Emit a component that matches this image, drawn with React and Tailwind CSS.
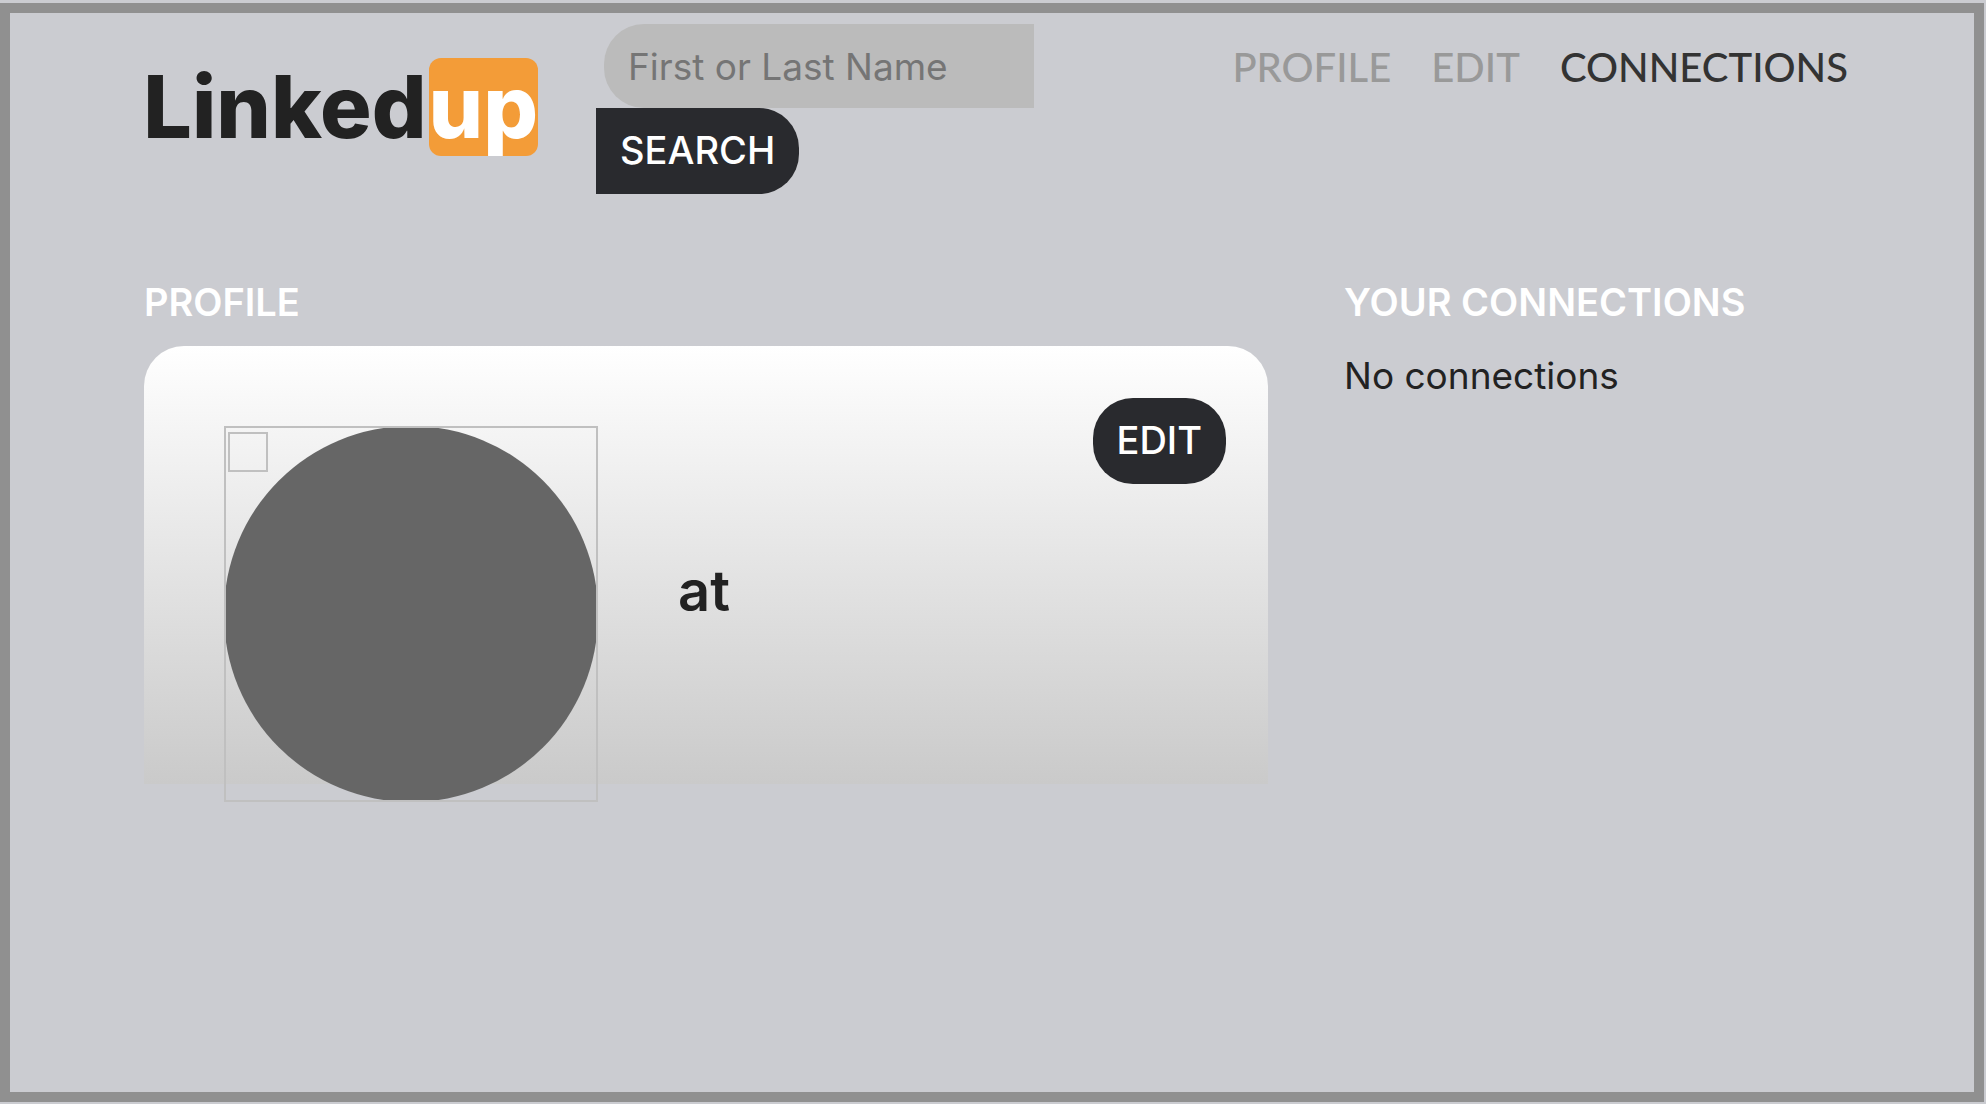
function Logo() {
  return (
    <a href="#" className="mt-[45px] flex w-[394px] shrink-0 items-center justify-end text-[86px] leading-[98px] font-extrabold text-[#222]">
      Linked
      <span className="ml-0.5 w-[110px] rounded-xl bg-[#f39c38] text-center text-white">up</span>
    </a>
  );
}

function SearchForm() {
  return (
    <form className="mt-[11px] flex w-[438px] flex-col items-start" onSubmit={(e) => e.preventDefault()}>
      <input
        type="text"
        aria-label="First or Last Name"
        placeholder="First or Last Name"
        className="ml-2 h-[84px] w-[430px] rounded-l-[40px] bg-[#bbb] px-6 text-[37px] text-[#222] outline-none placeholder:text-[#757575]"
      />
      <button type="submit" className="h-[86px] rounded-r-[40px] bg-[#292a2e] px-6 pb-0.5 text-[38px] font-medium text-white">
        SEARCH
      </button>
    </form>
  );
}

function Nav() {
  return (
    <nav className="mt-[30px] ml-auto flex gap-10 font-['Lato',sans-serif] text-[40px] leading-[48px] font-medium">
      <a href="#profile" className="text-[#999]">PROFILE</a>
      <a href="#edit" className="text-[#999]">EDIT</a>
      <a href="#connections" className="text-[#333]">CONNECTIONS</a>
    </nav>
  );
}

function Avatar() {
  return (
    <div className="relative h-[376px] w-[374px] shrink-0">
      <div className="h-full w-full rounded-full bg-[#666]" />
      <div className="absolute inset-0 border-2 border-[#c0c0c0]" />
      <div className="absolute top-1.5 left-1 size-10 border-2 border-[#c0c0c0]" />
    </div>
  );
}

export default function App() {
  return (
    <div className="flex min-h-screen bg-[#cbccd1] pt-[3px] pr-0.5 pb-0.5 font-['Inter',sans-serif] text-[38px] leading-[48px] text-[#222]">
      <div className="flex-1 border-10 border-[#909090] pr-[126px] pl-[134px]">
        <header className="flex h-[232px] items-start gap-[58px]">
          <Logo />
          <SearchForm />
          <Nav />
        </header>
        <main className="grid grid-cols-[1124fr_504fr] gap-[76px] pt-[33px]">
          <section>
            <h2 className="font-semibold text-white">PROFILE</h2>
            <div className="relative mt-5 flex h-[438px] rounded-t-[40px] bg-linear-to-b from-white to-[#cacaca] pt-20 pl-20">
              <Avatar />
              <p className="ml-20 pt-[131px] text-[56px] leading-[68px] font-semibold">at</p>
              <button type="button" className="absolute top-[52px] right-[42px] h-[86px] rounded-[40px] bg-[#292a2e] px-6 pb-0.5 text-[38px] font-medium text-white">
                EDIT
              </button>
            </div>
          </section>
          <section>
            <h2 className="font-semibold whitespace-nowrap text-white">YOUR CONNECTIONS</h2>
            <p className="mt-[26px] text-[37px]">No connections</p>
          </section>
        </main>
      </div>
    </div>
  );
}
